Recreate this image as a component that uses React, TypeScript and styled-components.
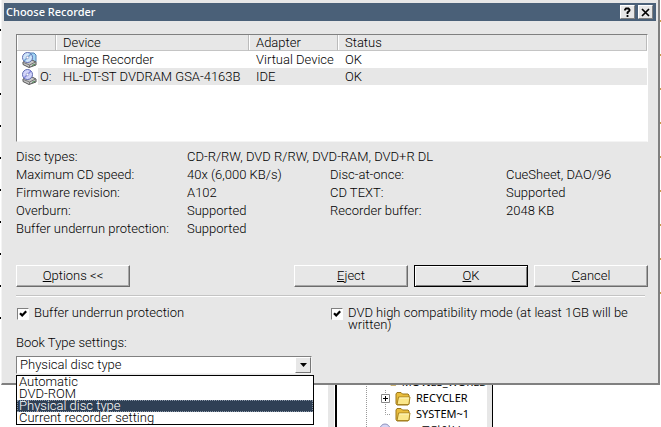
import React from "react";
import styled, { createGlobalStyle, css } from "styled-components";

const face = "#e7e7e7";
const shade = "#808080";

const Global = createGlobalStyle`
  * { box-sizing: border-box; }
  body {
    margin: 0;
    background: #fff;
    color: #000;
    font-family: Roboto, "Noto Sans CJK KR", sans-serif;
    font-size: 13px;
    font-weight: 300;
    line-height: 18px;
    overflow: hidden;
  }
  button, select, input { font: inherit; color: inherit; margin: 0; }
`;

const Screen = styled.div`
  display: grid;
  grid-template-columns: minmax(0, 1fr);
  height: 100vh;
  overflow: hidden;
`;

const Desktop = styled.div`
  grid-area: 1 / 1;
  display: flex;
  align-items: stretch;
  justify-content: space-between;
  overflow: hidden;
`;

const Ticks = styled.div<{ $color: string; $step: number; $first: number }>`
  width: 1px;
  height: 320px;
  background: repeating-linear-gradient(
    #fff 0 ${(p) => p.$first}px,
    ${(p) => p.$color} ${(p) => p.$first}px ${(p) => p.$first + 2}px,
    #fff ${(p) => p.$first + 2}px ${(p) => p.$step}px
  );
`;

const Explorer = styled.div`
  flex: 1;
  display: grid;
  grid-template-columns: 333px 159px 1fr;
  overflow: hidden;
`;

const Divider = styled.div`
  border-right: 6px solid ${face};
`;

const TreePane = styled.div`
  display: flex;
  flex-direction: column;
  justify-content: flex-end;
  margin-left: 1px;
  border-left: 2px solid #000;
  border-right: 1px solid #000;
  box-shadow: inset -5px 0 0 ${face};
  overflow: hidden;
`;

const Tree = styled.ul`
  list-style: none;
  margin: 0 5px -12px 29px;
  padding: 0;
  border-left: 1px dotted #999;
  flex: none;
`;

const TreeItem = styled.li<{ $root?: boolean }>`
  display: flex;
  align-items: center;
  gap: 5px;
  height: ${(p) => (p.$root ? 17 : 16)}px;
  margin-left: ${(p) => (p.$root ? -5 : 0)}px;
  padding-left: ${(p) => (p.$root ? 0 : 14)}px;
  font: 400 11px/16px "Noto Sans", "Noto Sans CJK KR", sans-serif;
  white-space: nowrap;
`;

const Dialog = styled.main`
  grid-area: 1 / 1;
  align-self: start;
  position: relative;
  margin: 0 1px;
  padding: 3px 2px 9px;
  background: ${face};
  border: 1px solid #f4f4f4;
  border-top: 0;
  border-right: 2px solid ${shade};
  border-bottom: 2px solid ${shade};
`;

const TitleBar = styled.header`
  display: flex;
  align-items: center;
  gap: 3px;
  height: 18px;
  padding: 0 3px 0 2px;
  background: #4a6078;
`;

const Title = styled.h1`
  flex: 1;
  margin: 0;
  color: #fff;
  font: 500 11px/16px "Noto Sans", sans-serif;
`;

const CaptionButton = styled.button`
  display: grid;
  place-items: center;
  width: 15px;
  height: 14px;
  padding: 0;
  border: 1px solid;
  border-color: #fff ${shade} ${shade} #fff;
  background: ${face};
`;

const Body = styled.div`
  padding: 13px 8px 0 12px;
`;

const DeviceBox = styled.div`
  height: 108px;
  border: 1px solid;
  border-color: ${shade} #fff #f4f4f4 ${shade};
  background: #fff;
`;

const DeviceTable = styled.table`
  width: 100%;
  table-layout: fixed;
  border-collapse: separate;
  border-spacing: 0;
  line-height: 15px;
`;

const HeadCell = styled.th<{ $w?: number }>`
  width: ${(p) => (p.$w ? `${p.$w}px` : "auto")};
  height: 16px;
  padding: 0 0 0 7px;
  background: ${face};
  border-bottom: 1px solid #c4c4c4;
  border-right: 1px solid #bbb;
  box-shadow: inset 1px 0 0 #fff;
  font-weight: inherit;
  text-align: left;
`;

const Cell = styled.td<{ $on?: boolean }>`
  height: 17px;
  padding: 0 0 1px 7px;
  white-space: nowrap;
  background: ${(p) => (p.$on ? face : "transparent")};
`;

const IconCell = styled(Cell)`
  padding: 0 0 0 4px;
  background: ${(p) => (p.$on ? `linear-gradient(90deg, #fff 21px, ${face} 21px)` : "transparent")};
`;

const IconLabel = styled.span`
  display: flex;
  align-items: center;
  gap: 2px;
`;

const Facts = styled.dl`
  display: grid;
  grid-template-columns: 171px 143px 176px minmax(0, 1fr);
  margin: 6px 0 0;
  white-space: nowrap;
`;

const Term = styled.dt`
  margin: 0;
`;

const Value = styled.dd<{ $wide?: boolean }>`
  margin: 0;
  ${(p) => p.$wide && css`grid-column: span 3;`}
`;

const Actions = styled.div`
  display: flex;
  gap: 6px;
  margin-top: 27px;
`;

const PushButton = styled.button<{ $default?: boolean; $start?: boolean }>`
  flex: 0 1 114px;
  height: 22px;
  padding: 0;
  line-height: 18px;
  background: ${face};
  border: 1px solid;
  border-color: #fff #6c6c6c #6c6c6c #fff;
  box-shadow: inset -1px -1px 0 #a8a8a8;
  ${(p) => p.$start && css`margin-right: auto;`}
  ${(p) =>
    p.$default &&
    css`
      border-color: #000;
      box-shadow: inset 1px 1px 0 #fff, inset -1px -1px 0 ${shade};
    `}
`;

const Rule = styled.hr`
  margin: 8px 3px 0 0;
  border: 0;
  border-top: 1px solid #c4c4c4;
  border-bottom: 1px solid #fff;
`;

const Checks = styled.div`
  display: grid;
  grid-template-columns: 314px minmax(0, 1fr);
  margin-top: 10px;
  line-height: 12px;
`;

const CheckLabel = styled.label`
  display: flex;
  align-items: flex-start;
  gap: 5px;
`;

const CheckBox = styled.input`
  appearance: none;
  flex: none;
  width: 12px;
  height: 12px;
  margin: 1px 0 0 1px;
  border: 1px solid;
  border-color: ${shade} #fff #fff ${shade};
  background: #fff
    url("data:image/svg+xml,%3Csvg xmlns='http://www.w3.org/2000/svg' viewBox='0 0 10 10'%3E%3Cpath d='M2 4.2 4.2 6.4 8.2 2.2' fill='none' stroke='%23000' stroke-width='2.2'/%3E%3C/svg%3E")
    center / 10px 10px no-repeat;
  &:not(:checked) { background: #fff; }
`;

const FieldLabel = styled.label`
  display: block;
  margin-top: 3px;
`;

const Combo = styled.div`
  position: relative;
  width: 298px;
  margin-top: 4px;
`;

const Select = styled.select`
  appearance: none;
  display: block;
  width: calc(100% - 2px);
  height: 18px;
  padding: 0 20px 0 3px;
  line-height: 16px;
  border: 1px solid;
  border-color: ${shade} #f4f4f4 #f4f4f4 ${shade};
  border-radius: 0;
  background: #fff;
  outline: none;
`;

const Arrow = styled.span`
  position: absolute;
  top: 1px;
  right: 3px;
  display: grid;
  place-items: center;
  width: 16px;
  height: 16px;
  border: 1px solid;
  border-color: #fff #777 #777 #fff;
  background: ${face};
  pointer-events: none;
`;

const Menu = styled.ul`
  position: absolute;
  top: 100%;
  left: 0;
  right: 0;
  z-index: 1;
  margin: 1px 0 0;
  padding: 0;
  list-style: none;
  border: 1px solid #000;
  background: #fff;
`;

const Choice = styled.li<{ $on: boolean }>`
  height: 12px;
  padding-left: 2px;
  line-height: 12px;
  ${(p) =>
    p.$on &&
    css`
      overflow: hidden;
      background: #2f4055;
      color: #fff;
      outline: 1px dotted #8a97a8;
      outline-offset: -1px;
    `}
`;

const Recorder = ({ image }: { image?: boolean }) => (
  <svg width="17" height="16" viewBox="0 0 17 16" aria-hidden="true">
    {image && <path d="M8 1h5l2 2v7H8z" fill="#9fd3f4" stroke="#5480b4" />}
    <path d="M2 10l7-3 6 3v3l-7 2.500-6-3z" fill="#c6c6c6" stroke="#555" />
    <path d="M2.500 10.500l6 2.500 6-3M8.500 13v2" fill="none" stroke="#777" />
    <path d="M11 13.500l3-1.300" stroke="#4b8a52" />
    <circle cx="6.500" cy="5.500" r="5" fill={image ? "#cfe6fa" : "#d2d4fa"} stroke="#5f6bb0" />
    <path d="M3 9l7-7" stroke={image ? "#6e9fd0" : "#8388dd"} strokeWidth="1.500" />
    <circle cx="6.500" cy="5.500" r="1.300" fill="#fff" stroke="#8088bb" strokeWidth=".6" />
  </svg>
);

const Folder = () => (
  <svg width="16" height="15" viewBox="0 0 16 15" aria-hidden="true">
    <path d="M1 12.500V3l1-1.500h4L7.500 3H13l1 1v8.500L13 14H2z" fill="#e9bd3c" stroke="#9b7618" />
    <path d="M2 13.500L3.500 6H15l-1.200 7.500z" fill="#fbe78a" stroke="#a88320" />
    <path d="M4.500 7H14" stroke="#fff7c4" />
  </svg>
);

const Expander = ({ open, linked }: { open?: boolean; linked?: boolean }) => (
  <svg width="9" height="16" viewBox="0 0 9 16" aria-hidden="true">
    {linked && <path d="M4.500 0v16" stroke="#999" strokeDasharray="1 1" />}
    <path d="M.5 4.500h8v8h-8z" fill="#fff" stroke="#888" />
    <path d={open ? "M2 8.500h5" : "M2 8.500h5M4.500 6v5"} stroke="#000" />
  </svg>
);

const Stub = () => (
  <svg width="9" height="16" viewBox="0 0 9 16" aria-hidden="true">
    <path d="M4.500 0v8.500H9" fill="none" stroke="#999" strokeDasharray="1 1" />
  </svg>
);

const Disc = () => (
  <svg width="22" height="16" viewBox="0 0 22 16" aria-hidden="true">
    <path d="M3 10l9-3 6 3v4H3z" fill="#c6c6c6" stroke="#666" />
    <circle cx="9" cy="6" r="5" fill="#d5d5f4" stroke="#8f93bd" />
    <circle cx="9" cy="6" r="1.500" fill="#fff" stroke="#8f93bd" />
  </svg>
);

const options = ["Automatic", "DVD-ROM", "Physical disc type", "Current recorder setting"];

const facts: string[][] = [
  ["Disc types:", "CD-R/RW, DVD R/RW, DVD-RAM, DVD+R DL"],
  ["Maximum CD speed:", "40x (6,000 KB/s)", "Disc-at-once:", "CueSheet, DAO/96"],
  ["Firmware revision:", "A102", "CD TEXT:", "Supported"],
  ["Overburn:", "Supported", "Recorder buffer:", "2048 KB"],
  ["Buffer underrun protection:", "Supported"],
];

export default function App() {
  const [choice, setChoice] = React.useState(options[2]);
  return (
    <>
      <Global />
      <Screen>
        <Desktop>
          <Ticks $color="#000" $step={32} $first={29} />
          <Explorer>
            <Divider />
            <TreePane>
              <Tree>
                <TreeItem><Expander linked /><Folder />MOVIES_WORLD</TreeItem>
                <TreeItem><Expander linked /><Folder />RECYCLER</TreeItem>
                <TreeItem><Stub /><Folder />SYSTEM~1</TreeItem>
                <TreeItem $root><Expander open /><Disc />CD 드라이브 (O:)</TreeItem>
              </Tree>
            </TreePane>
          </Explorer>
          <Ticks $color="#c89a4a" $step={34} $first={20} />
        </Desktop>

        <Dialog role="dialog" aria-labelledby="dialog-title">
          <TitleBar>
            <Title id="dialog-title">Choose Recorder</Title>
            <CaptionButton type="button" aria-label="Help">
              <svg width="9" height="10" viewBox="0 0 9 10" aria-hidden="true">
                <path d="M2 3.500V2.500L3 1.500h2.500l1 1v1.200L4.500 5.500V7M4.500 8v2" fill="none" stroke="#000" strokeWidth="1.800" />
              </svg>
            </CaptionButton>
            <CaptionButton type="button" aria-label="Close">
              <svg width="9" height="9" viewBox="0 0 9 9" aria-hidden="true">
                <path d="M1 1l7 7M8 1L1 8" stroke="#000" strokeWidth="1.700" />
              </svg>
            </CaptionButton>
          </TitleBar>

          <Body>
            <DeviceBox>
              <DeviceTable>
                <thead>
                  <tr>
                    <HeadCell $w={39} aria-label="Drive" />
                    <HeadCell $w={193}>Device</HeadCell>
                    <HeadCell $w={89}>Adapter</HeadCell>
                    <HeadCell>Status</HeadCell>
                  </tr>
                </thead>
                <tbody>
                  <tr>
                    <IconCell><IconLabel><Recorder image /></IconLabel></IconCell>
                    <Cell>Image Recorder</Cell>
                    <Cell>Virtual Device</Cell>
                    <Cell>OK</Cell>
                  </tr>
                  <tr aria-selected="true">
                    <IconCell $on><IconLabel><Recorder />O:</IconLabel></IconCell>
                    <Cell $on>HL-DT-ST DVDRAM GSA-4163B</Cell>
                    <Cell $on>IDE</Cell>
                    <Cell $on>OK</Cell>
                  </tr>
                </tbody>
              </DeviceTable>
            </DeviceBox>

            <Facts>
              {facts.map(([a, b, c, d]) => (
                <React.Fragment key={a}>
                  <Term>{a}</Term>
                  <Value $wide={!c}>{b}</Value>
                  {c && <Term>{c}</Term>}
                  {c && <Value>{d}</Value>}
                </React.Fragment>
              ))}
            </Facts>

            <Actions>
              <PushButton type="button" $start><u>O</u>ptions &lt;&lt;</PushButton>
              <PushButton type="button"><u>E</u>ject</PushButton>
              <PushButton type="button" $default><u>O</u>K</PushButton>
              <PushButton type="button"><u>C</u>ancel</PushButton>
            </Actions>

            <Rule />

            <Checks>
              <CheckLabel>
                <CheckBox type="checkbox" defaultChecked />
                Buffer underrun protection
              </CheckLabel>
              <CheckLabel>
                <CheckBox type="checkbox" defaultChecked />
                DVD high compatibility mode (at least 1GB will be written)
              </CheckLabel>
            </Checks>

            <FieldLabel htmlFor="book-type">Book Type settings:</FieldLabel>
            <Combo>
              <Select id="book-type" value={choice} onChange={(e) => setChoice(e.target.value)}>
                {options.map((o) => <option key={o}>{o}</option>)}
              </Select>
              <Arrow>
                <svg width="7" height="4" viewBox="0 0 7 4" aria-hidden="true"><path d="M0 0h7L3.500 4z" /></svg>
              </Arrow>
              <Menu role="listbox" aria-label="Book Type settings">
                {options.map((o) => (
                  <Choice key={o} role="option" aria-selected={o === choice} $on={o === choice} onClick={() => setChoice(o)}>
                    {o}
                  </Choice>
                ))}
              </Menu>
            </Combo>
          </Body>
        </Dialog>
      </Screen>
    </>
  );
}
